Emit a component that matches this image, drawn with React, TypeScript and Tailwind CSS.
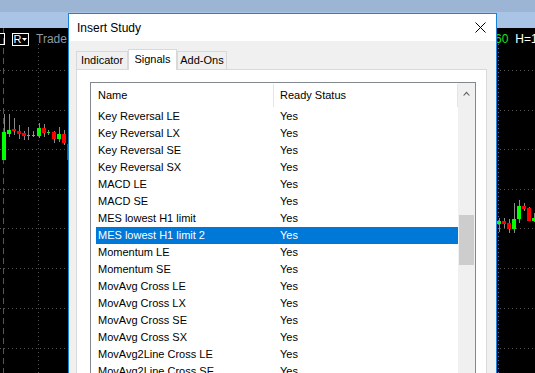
import React from 'react';

type Candle = [number, number, number, number, number, number, 'g' | 'r'];

// x, width, bodyTop, bodyBottom, wickTop, wickBottom, colour
const LEFT_CANDLES: Candle[] = [
  [2, 4, 132, 160, 114, 160, 'g'],
  [7, 4, 130, 134, 114, 137, 'g'],
  [12, 4, 129, 131, 118, 135, 'r'],
  [17, 4, 131, 134, 125, 139, 'r'],
  [22, 4, 133, 136, 131, 140, 'r'],
  [27, 3, 135, 136, 127, 140, 'g'],
  [32, 3, 135, 136, 131, 137, 'g'],
  [37, 4, 128, 136, 123, 138, 'g'],
  [42, 4, 128, 133, 124, 137, 'r'],
  [47, 3, 132, 133, 130, 135, 'g'],
  [52, 4, 132, 139, 131, 143, 'r'],
  [57, 4, 134, 139, 127, 142, 'g'],
  [62, 4, 134, 143, 130, 145, 'r'],
  [67, 4, 144, 160, 140, 162, 'r'],
];

const RIGHT_CANDLES: Candle[] = [
  [497, 4, 221, 224, 218, 232, 'g'],
  [502, 4, 221, 224, 218, 228, 'r'],
  [507, 4, 223, 229, 219, 233, 'r'],
  [512, 4, 219, 229, 203, 233, 'g'],
  [517, 4, 206, 219, 200, 223, 'g'],
  [522, 4, 206, 209, 203, 211, 'r'],
  [527, 4, 208, 221, 207, 221, 'r'],
  [532, 4, 218, 221, 213, 222, 'g'],
];

const GRID_Y = [70, 110, 149, 189, 228, 268, 308, 348];

const SIGNALS = [
  'Key Reversal LE',
  'Key Reversal LX',
  'Key Reversal SE',
  'Key Reversal SX',
  'MACD LE',
  'MACD SE',
  'MES lowest H1 limit',
  'MES lowest H1 limit 2',
  'Momentum LE',
  'Momentum SE',
  'MovAvg Cross LE',
  'MovAvg Cross LX',
  'MovAvg Cross SE',
  'MovAvg Cross SX',
  'MovAvg2Line Cross LE',
  'MovAvg2Line Cross SE',
];

const SELECTED = 'MES lowest H1 limit 2';

function ChartBackdrop() {
  const candles = [...LEFT_CANDLES, ...RIGHT_CANDLES];
  return (
    <svg
      className="absolute left-0 top-[28px]"
      width={535}
      height={345}
      viewBox="0 28 535 345"
    >
      {GRID_Y.map(y => (
        <line key={y} x1={0} x2={535} y1={y + 0.5} y2={y + 0.5} stroke="#555" strokeDasharray="1 3" />
      ))}
      <line x1={3.5} x2={3.5} y1={28} y2={373} stroke="#555" strokeDasharray="6 4" />
      <line x1={38.5} x2={38.5} y1={44} y2={373} stroke="#555" strokeDasharray="1 3" />
      <line x1={498.5} x2={498.5} y1={44} y2={373} stroke="#4a6fa0" strokeDasharray="1 3" />
      {candles.map(([x, w, bt, bb, wt, wb, c], i) => (
        <g key={i}>
          <rect x={x + Math.floor(w / 2)} y={wt} width={1} height={wb - wt} fill="#8a8a8a" />
          <rect x={x} y={bt} width={w} height={Math.max(bb - bt, 1)} fill={c === 'g' ? '#00ff00' : '#ff0000'} />
        </g>
      ))}
    </svg>
  );
}

function ChartToolbar() {
  return (
    <div className="relative flex h-[22px] items-center gap-[7px] -ml-[8px] text-[12px]">
      <div className="h-[12px] w-[13px] border border-white" />
      <div className="flex h-[13px] w-[17px] items-center justify-center gap-[1px] border border-white text-white leading-none">
        <span className="text-[11px]">R</span>
        <svg width={5} height={3} viewBox="0 0 5 3">
          <path d="M0 0 L5 0 L2.5 3 Z" fill="#fff" />
        </svg>
      </div>
      <span className="text-[#8e99a4]">Trade</span>
      <div className="absolute left-[503px] flex items-center gap-[7px] whitespace-nowrap">
        <span className="text-[#1ee01e]">60</span>
        <span className="text-white">H=13</span>
      </div>
    </div>
  );
}

function Tab({ label, active, width }: { label: string; active?: boolean; width: number }) {
  return (
    <div
      style={{ width }}
      className={
        active
          ? 'relative z-10 -mb-px flex h-[21px] items-center justify-center border border-b-0 border-[#d9d9d9] bg-white pb-[2px]'
          : 'flex h-[18px] items-center justify-center border border-b-0 border-[#d9d9d9] bg-[#f0f0f0]'
      }
    >
      {label}
    </div>
  );
}

function SignalList() {
  return (
    <div className="flex h-[300px] w-[386px] border border-[#828790] bg-white">
      <div className="w-[367px]">
        <div className="flex h-[25px] items-center">
          <div className="flex h-[23px] w-[183px] items-center border-r border-[#e5e5e5] pl-[7px]">Name</div>
          <div className="flex h-[23px] flex-1 items-center border-r border-[#e5e5e5] pl-[6px]">Ready Status</div>
        </div>
        {SIGNALS.map(name => {
          const sel = name === SELECTED;
          return (
            <div
              key={name}
              className={
                'ml-[5px] flex h-[17px] w-[362px] items-center pl-[2px] whitespace-nowrap ' +
                (sel ? 'bg-[#0078d7] text-white' : 'text-black')
              }
            >
              <span className="w-[182px]">{name}</span>
              <span>Yes</span>
            </div>
          );
        })}
      </div>
      <div className="w-[17px] bg-[#f0f0f0]">
        <div className="flex h-[17px] items-center justify-center pt-[3px]">
          <svg width={7} height={5} viewBox="0 0 7 5">
            <path d="M0 4.5 L3.5 0.5 L7 4.5 L5.6 4.5 L3.5 2.2 L1.4 4.5 Z" fill="#606060" />
          </svg>
        </div>
        <div className="mx-auto mt-[115px] h-[50px] w-[15px] bg-[#cdcdcd]" />
      </div>
    </div>
  );
}

function InsertStudyDialog() {
  return (
    <div className="absolute left-[68px] top-[13px] flex h-[370px] w-[429px] flex-col border border-b-0 border-[#1883d7] bg-[#f0f0f0] text-[11px] text-black">
      <div className="flex h-[30px] items-center justify-between bg-white pl-[8px] pr-[10px]">
        <span className="text-[12px]">Insert Study</span>
        <svg width={11} height={11} viewBox="0 0 11 11">
          <path d="M0.5 0.5 L10.5 10.5 M10.5 0.5 L0.5 10.5" stroke="#000" strokeWidth={1} />
        </svg>
      </div>
      <div className="flex flex-1 flex-col pl-[7px] pr-[9px] pt-[8px]">
        <div className="flex items-end">
          <Tab label="Indicator" width={52} />
          <Tab label="Signals" width={49} active />
          <Tab label="Add-Ons" width={50} />
        </div>
        <div className="flex-1 border border-[#d9d9d9] bg-white pl-[13px] pt-[12px]">
          <SignalList />
        </div>
      </div>
    </div>
  );
}

export default function App() {
  return (
    <div className="relative h-[373px] w-[535px] overflow-hidden bg-black font-['Liberation_Sans',Arial,sans-serif]">
      <div className="h-[12px] bg-[#9cb5d4]" />
      <div className="h-[16px] bg-[#a9c4e4]" />
      <ChartBackdrop />
      <ChartToolbar />
      <InsertStudyDialog />
    </div>
  );
}
